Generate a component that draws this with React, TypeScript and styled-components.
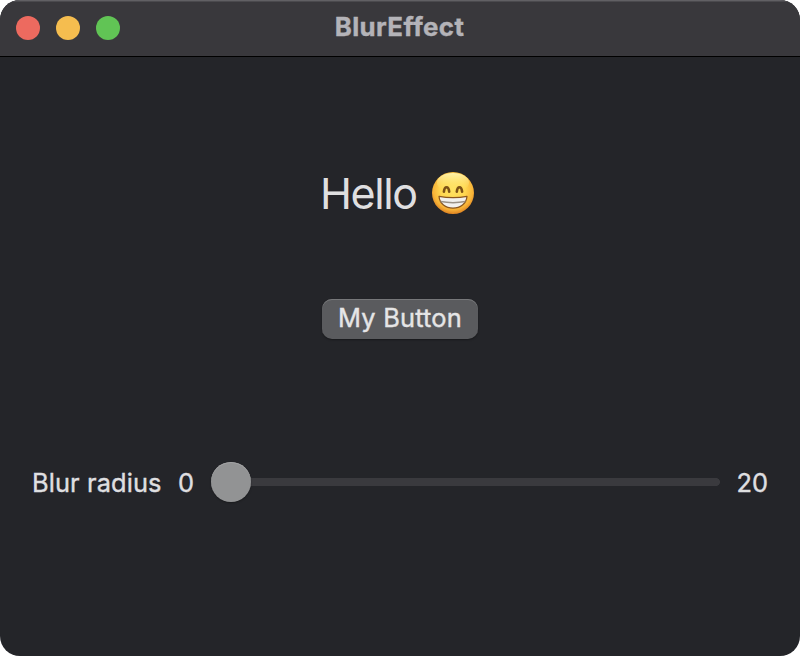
import React, { useState } from 'react';
import styled, { createGlobalStyle } from 'styled-components';

const GlobalStyle = createGlobalStyle`
  body { margin: 0; background: #fff; }
  * { box-sizing: border-box; }
`;

const Window = styled.main`
  width: 800px;
  height: 656px;
  border-radius: 20px;
  overflow: hidden;
  display: flex;
  flex-direction: column;
  background: #242529;
  color: #dfdfe0;
  font-family: Inter, 'Liberation Sans', sans-serif;
`;

const TitleBar = styled.header`
  height: 57px;
  flex: none;
  display: grid;
  grid-template-columns: 1fr auto 1fr;
  align-items: center;
  padding: 0 16px 1px;
  background: #39383c;
  border-bottom: 1px solid #000;
  box-shadow: inset 0 1px #616064, inset 0 2px #4b4a4e;
`;

const Lights = styled.div`
  display: flex;
  gap: 16px;
`;

const Light = styled.span<{ $color: string }>`
  width: 24px;
  height: 24px;
  border-radius: 50%;
  background: ${(p) => p.$color};
`;

const Title = styled.h1`
  margin: 0 1px 2px 0;
  font-size: 25.8px;
  line-height: 30px;
  font-weight: 700;
  letter-spacing: 0.4px;
  font-variant-ligatures: none;
  color: #b4b3b8;
  -webkit-text-stroke: 0.4px currentColor;
`;

const Content = styled.section`
  flex: 1;
  display: flex;
  flex-direction: column;
  align-items: center;
`;

const Greeting = styled.div`
  width: 160px;
  height: 52px;
  margin-top: 110px;
  display: flex;
  align-items: center;
  justify-content: space-between;
  padding: 0 5px 0 0;
  font-size: 43px;
  line-height: 52px;
  letter-spacing: -1.4px;
`;

const PushButton = styled.button`
  width: 156px;
  height: 40px;
  margin-top: 80px;
  padding: 0 0 2px;
  border: 0;
  border-radius: 10px;
  background: #5a5b5e;
  box-shadow: inset 0 1px #77787a, 0 1px 2px rgba(0, 0, 0, 0.35);
  color: #e5e5e6;
  font: 400 25.4px/30px Inter, sans-serif;
  letter-spacing: 0.2px;
  -webkit-text-stroke: 0.4px currentColor;
`;

const SliderRow = styled.div`
  align-self: stretch;
  height: 40px;
  margin: 123px 32px 0;
  display: grid;
  grid-template-columns: 146px 33px 509px 1fr;
  align-items: center;
  font-size: 25.4px;
  line-height: 32px;
  -webkit-text-stroke: 0.4px currentColor;
`;

const Label = styled.span<{ $tracking?: number; $end?: boolean }>`
  letter-spacing: ${(p) => p.$tracking ?? 0}px;
  justify-self: ${(p) => (p.$end ? 'end' : 'start')};
  white-space: nowrap;
  padding-top: 2px;
`;

const Range = styled.input`
  appearance: none;
  width: 509px;
  height: 40px;
  margin: 0;
  background: linear-gradient(#3a3a3e, #3a3a3e) 0 16px / 505px 8px no-repeat,
    radial-gradient(circle at 505px 20px, #3a3a3e 3.6px, transparent 4.2px);

  &::-webkit-slider-thumb {
    appearance: none;
    width: 40px;
    height: 40px;
    border-radius: 50%;
    background: #929394;
    box-shadow: inset 0 1px #a2a3a4, 0 1px 2px rgba(0, 0, 0, 0.3);
  }
`;

const Face = styled.svg`
  width: 44px;
  height: 44px;
  display: block;
`;

function GrinningFace() {
  return (
    <Face viewBox="0 0 44 44" role="img" aria-label="Grinning face">
      <defs>
        <radialGradient id="skin" cx="50%" cy="42%" r="59%">
          <stop offset="0" stopColor="#ffe262" />
          <stop offset=".5" stopColor="#ffd750" />
          <stop offset=".8" stopColor="#f8b438" />
          <stop offset="1" stopColor="#dc7f20" />
        </radialGradient>
        <linearGradient id="shine" x1="0" y1="0" x2="0" y2="1">
          <stop offset="0" stopColor="#fff9b8" stopOpacity=".9" />
          <stop offset="1" stopColor="#ffe05a" stopOpacity="0" />
        </linearGradient>
      </defs>
      <circle cx="22" cy="22" r="21" fill="url(#skin)" />
      <ellipse cx="22" cy="11.5" rx="16" ry="9.5" fill="url(#shine)" />
      <path
        d="M12.9 20.7c.6-6 4.700-6 5.300 0M25.800 20.700c.6-6 4.700-6 5.300 0"
        fill="none"
        stroke="#7d5216"
        strokeWidth="2.6"
        strokeLinecap="round"
      />
      <path
        d="M8 25.400c9.300 1.700 18.700 1.700 28 0-.6 7.300-6.700 11.700-14 11.700S8.600 32.700 8 25.400Z"
        fill="#f2f1ee"
        stroke="#8b571f"
        strokeWidth="1.2"
        strokeLinejoin="round"
      />
      <path
        d="M9.600 30.600c8.200 1.500 16.600 1.500 24.800 0"
        fill="none"
        stroke="#9a9287"
        strokeWidth="1.500"
      />
    </Face>
  );
}

export default function App() {
  const [radius, setRadius] = useState(0);

  return (
    <>
      <GlobalStyle />
      <Window>
        <TitleBar>
          <Lights>
            <Light $color="#ed6a5f" />
            <Light $color="#f5bd4f" />
            <Light $color="#61c455" />
          </Lights>
          <Title>BlurEffect</Title>
        </TitleBar>
        <Content>
          <Greeting>
            <span>Hello</span>
            <GrinningFace />
          </Greeting>
          <PushButton>My Button</PushButton>
          <SliderRow>
            <Label $tracking={0.1}>Blur radius</Label>
            <Label>0</Label>
            <Range
              type="range"
              min={0}
              max={20}
              value={radius}
              aria-label="Blur radius"
              onChange={(e) => setRadius(Number(e.target.value))}
            />
            <Label $end>20</Label>
          </SliderRow>
        </Content>
      </Window>
    </>
  );
}
